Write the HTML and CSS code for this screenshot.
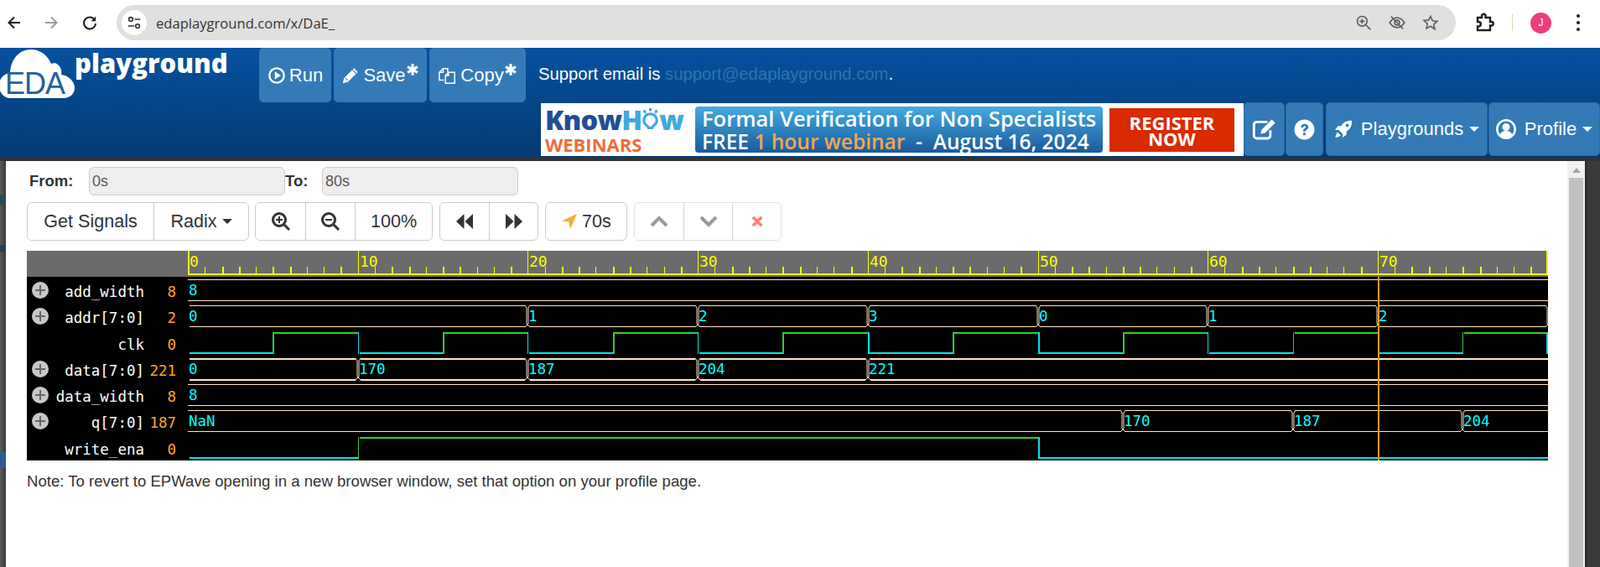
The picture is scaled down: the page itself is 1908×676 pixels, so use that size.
FILE: index.html
```html
<!DOCTYPE html>
<html lang="en">
<head>
  <meta charset="UTF-8" />
  <title>EDA Playground</title>
  <link rel="stylesheet" href="styles.css">
</head>
<body>
  <div class="chrome">
    <svg class="ci ci-back" viewBox="0 0 20 20"><path d="M17 10H4M10 3.5 3.5 10l6.5 6.5"/></svg>
    <svg class="ci ci-fwd" viewBox="0 0 20 20"><path d="M3 10h13M10 3.5l6.5 6.5-6.5 6.500"/></svg>
    <svg class="ci ci-reload" viewBox="0 0 20 20"><path d="M15.800 6.500A7 7 0 1 0 17 11"/><path class="solid" d="M17.200 2.600v5.600h-5.600z"/></svg>
    <div class="omnibox">
      <span class="site-info">
        <svg viewBox="0 0 20 20"><circle cx="5.500" cy="5.500" r="2.600"/><path d="M10.500 5.500H18M2 14.500h8"/><circle cx="14.500" cy="14.500" r="2.600"/></svg>
      </span>
      <span class="url">edaplayground.com/x/DaE_</span>
      <span class="omni-icons">
        <svg class="oi" viewBox="0 0 24 24"><circle cx="10" cy="10" r="7"/><path d="M15 15l7 7M10 6.500v7M6.500 10h7"/></svg>
        <svg class="oi" viewBox="0 0 24 24"><path d="M1.500 12S6 5 12 5s10.500 7 10.500 7-4.500 7-10.500 7S1.500 12 1.500 12z"/><circle cx="12" cy="12" r="3.500"/><path d="M3.500 3l17 18"/></svg>
        <svg class="oi" viewBox="0 0 24 24"><path d="M12 3l2.800 6.300 6.700.7-5 4.600 1.400 6.700L12 17.200l-5.900 3.100 1.400-6.700-5-4.600 6.700-.7z"/></svg>
      </span>
    </div>
    <svg class="ci ci-ext" viewBox="0 0 24 24"><path d="M4 6h5V4a2.200 2.200 0 0 1 4.500 0v2H19v5h1.500a2.200 2.200 0 0 1 0 4.500H19V21H4v-4.500h1.500a2.800 2.800 0 0 0 0-5.500H4z"/></svg>
    <span class="ci-divider"></span>
    <span class="avatar">J</span>
    <span class="dots"><i></i><i></i><i></i></span>
  </div>

  <header class="site-header">
    <div class="head-top">
      <div class="logo">
        <svg class="cloud" viewBox="0 0 92 62">
          <path d="M14 60C5 60 0 53 0 45c0-8 5-14 13-15C14 13 24 2 38 2c11 0 20 7 24 17 3-1 6-1 8 1 4 3 5 8 4 12 9 1 16 8 16 16 0 7-6 12-13 12z"/>
          <text x="7" y="55">EDA</text>
        </svg>
        <span class="logo-word">playground</span>
      </div>
      <a class="btn-head btn-run">
        <svg class="fa" viewBox="0 0 24 24"><circle cx="12" cy="12" r="9.500" class="ring"/><path d="M9.500 6.800v10.400l8-5.200z"/></svg>Run
      </a>
      <a class="btn-head btn-save">
        <svg class="fa" viewBox="0 0 24 24"><path d="M2 22l1.500-6.500L16.500 2.500l5 5L8.500 20.500zM5 16.500l2.500 2.500"/><path class="cut" d="M5.500 15.500l3 3M14.500 4.500l5 5"/></svg>Save<svg class="aster" viewBox="0 0 14 14"><path d="M7 1v12M1.800 4l10.400 6M12.200 4 1.800 10"/></svg>
      </a>
      <a class="btn-head btn-copy">
        <svg class="fa" viewBox="0 0 24 24"><path class="ring" d="M8 18H2V8l5-5h6v5"/><path class="ring" d="M7 3v5H2M10 22V12l4-4h8v14zM14 8v4h-4"/></svg>Copy<svg class="aster" viewBox="0 0 14 14"><path d="M7 1v12M1.800 4l10.400 6M12.200 4 1.800 10"/></svg>
      </a>
      <p class="support">Support email is <a>support@edaplayground.com</a>.</p>
    </div>
    <div class="head-bottom">
      <div class="banner">
        <div class="kh">
          <div class="kh-name">Know<span class="kh-how">H<svg class="bulb" viewBox="0 0 24 32"><path d="M12 9a8.500 8.500 0 0 1 5 15.500c-1.500 1-2 2-2.500 3.500h-5c-.5-1.500-1-2.500-2.500-3.500A8.500 8.500 0 0 1 12 9z"/><path d="M12 1v4M3 4l2.500 3.500M21 4l-2.500 3.500"/></svg>w</span></div>
          <div class="kh-sub">WEBINARS</div>
        </div>
        <div class="bn-blue">
          <div class="bn-line bn-first">Formal Verification for Non Specialists</div>
          <div class="bn-line">FREE <span class="bn-or">1 hour webinar</span>&nbsp; -&nbsp; August 16, 2024</div>
        </div>
        <div class="bn-red">REGISTER<br>NOW</div>
      </div>
      <a class="btn-head btn-edit">
        <svg class="fa" viewBox="0 0 26 24"><path class="ring" d="M19 13v5.500a3 3 0 0 1-3 3H5a3 3 0 0 1-3-3V7.500a3 3 0 0 1 3-3h11"/><path d="M9 17l1-4.500L20.500 2 24 5.500 13.500 16z"/></svg>
      </a>
      <a class="btn-head btn-help">
        <svg class="fa" viewBox="0 0 24 24"><circle cx="12" cy="12" r="11.500"/><path class="hole" d="M8 9.500C8 7 10 5.500 12.300 5.500c2.500 0 4.200 1.600 4.200 3.700 0 3-3.200 3-3.200 5H10.500c0-3.500 3-3.500 3-5 0-.8-.6-1.200-1.300-1.200-.9 0-1.500.6-1.700 1.500zM10.500 15.500h2.800v3h-2.800z"/></svg>
      </a>
      <a class="btn-head btn-play">
        <svg class="fa" viewBox="0 0 24 24"><path d="M23 1c-6-.5-11 2-14 7H5l-4 5h5l5 5v5l5-4v-4c5-3 7.500-8 7-14zM17 5a2 2 0 1 1 0 4 2 2 0 0 1 0-4zM4.500 16c-1.500 1-2.500 4-3 7 3-.5 6-1.500 7-3z"/></svg>Playgrounds<span class="caret"></span>
      </a>
      <a class="btn-head btn-profile">
        <svg class="fa" viewBox="0 0 24 24"><circle cx="12" cy="12" r="10.700" class="ring"/><circle cx="12" cy="9.500" r="4.500"/><path d="M4.500 19c1-3.500 3.500-5 7.500-5s6.500 1.500 7.500 5c-2 2-4.500 3.500-7.500 3.500S6.500 21 4.500 19z"/></svg>Profile<span class="caret"></span>
      </a>
    </div>
  </header>

  <div class="dim-top"></div>
  <div class="page">
    <div class="dim-left"></div>
    <main class="panel">
      <div class="range">
        <label class="lbl-from">From:</label>
        <input class="rng" value="0s" disabled>
        <label class="lbl-to">To:</label>
        <input class="rng" value="80s" disabled>
      </div>
      <div class="toolbar">
        <div class="group g-first">
          <button class="b-signals">Get Signals</button>
          <button class="b-radix">Radix<span class="caret dark"></span></button>
        </div>
        <div class="group">
          <button class="b-zoom"><svg class="tb" viewBox="0 0 24 24"><circle cx="10" cy="10" r="7.500"/><path d="M15.500 15.500 22 22"/><path class="fine" d="M10 6v8M6 10h8"/></svg></button>
          <button class="b-zoom"><svg class="tb" viewBox="0 0 24 24"><circle cx="10" cy="10" r="7.500"/><path d="M15.500 15.500 22 22"/><path class="fine" d="M6 10h8"/></svg></button>
          <button class="b-pct">100%</button>
        </div>
        <div class="group">
          <button class="b-step"><svg class="tb solid" viewBox="0 0 24 24"><path d="M11.500 3v18L2 12zM22 3v18l-9.500-9z"/></svg></button>
          <button class="b-step"><svg class="tb solid" viewBox="0 0 24 24"><path d="M2 3v18l9.500-9zM12.500 3v18L22 12z"/></svg></button>
        </div>
        <div class="group">
          <button class="b-marker"><svg class="tb marker" viewBox="0 0 20 20"><path d="M19 1 11 19l-1.500-8.500L1 9.500z"/></svg>70s</button>
        </div>
        <div class="group off">
          <button class="b-off"><svg class="tb chev" viewBox="0 0 24 24"><path d="M3 17l9-9 9 9"/></svg></button>
          <button class="b-off"><svg class="tb chev" viewBox="0 0 24 24"><path d="M3 7l9 9 9-9"/></svg></button>
          <button class="b-off"><svg class="tb cross" viewBox="0 0 24 24"><path d="M5 5l14 14M19 5 5 19"/></svg></button>
        </div>
      </div>
      <svg id="wave" class="wave" viewBox="32 299 1814 250" width="1814" height="250"></svg>
      <p class="note">Note: To revert to EPWave opening in a new browser window, set that option on your profile page.</p>
    </main>
    <div class="scrollbar">
      <span class="sb-up"></span>
      <span class="sb-thumb"></span>
    </div>
    <div class="dim-right"></div>
  </div>
  <script src="script.js"></script>
</body>
</html>
```
FILE: styles.css
```css
html, body {
  margin: 0;
  padding: 0;
  height: 100%;
  overflow: hidden;
}

body {
  display: flex;
  flex-direction: column;
  font-family: "Liberation Sans", Arial, sans-serif;
  color: #333;
  background: #fff;
}

/* browser bar */
.chrome {
  height: 57px;
  flex: none;
  display: flex;
  align-items: center;
  padding-bottom: 3px;
  box-sizing: border-box;
  background: #fff;
}

.ci {
  width: 20px;
  height: 20px;
  fill: none;
  stroke: #1f1f1f;
  stroke-width: 2;
}

.ci .solid { fill: #1f1f1f; stroke: none; }
.ci-back { margin-left: 7px; }
.ci-fwd { margin-left: 24px; stroke: #9a9a9a; }
.ci-reload { margin-left: 26px; }

.omnibox {
  width: 1597px;
  height: 42px;
  margin-left: 22px;
  border-radius: 21px;
  background: #e0e0e0;
  display: flex;
  align-items: center;
}

.site-info {
  width: 30px;
  height: 30px;
  margin-left: 6px;
  border-radius: 50%;
  background: #fff;
  display: flex;
  align-items: center;
  justify-content: center;
}

.site-info svg {
  width: 18px;
  height: 18px;
  fill: none;
  stroke: #333;
  stroke-width: 1.800;
}

.url {
  margin-left: 11px;
  font-family: "Open Sans", sans-serif;
  font-size: 16.600px;
  color: #333;
  white-space: nowrap;
}

.omni-icons {
  margin-left: auto;
  margin-right: 20px;
  display: flex;
  gap: 20px;
}

.oi {
  width: 20px;
  height: 20px;
  fill: none;
  stroke: #5f5f5f;
  stroke-width: 2;
}

.ci-ext {
  width: 24px;
  height: 24px;
  margin-left: 22px;
  stroke-width: 2.400;
}

.ci-divider {
  width: 1px;
  height: 20px;
  margin-left: 21px;
  background: #c6e0bd;
}

.avatar {
  width: 25px;
  height: 25px;
  margin-left: 21px;
  border-radius: 50%;
  background: #ec3f7d;
  color: #fff;
  font-size: 12px;
  line-height: 25px;
  text-align: center;
}

.dots {
  margin-left: 30px;
  display: flex;
  flex-direction: column;
  gap: 4px;
}

.dots i {
  width: 4px;
  height: 4px;
  border-radius: 50%;
  background: #1f1f1f;
}

/* site header */
.site-header {
  height: 131px;
  flex: none;
  background: linear-gradient(to bottom, #05529f, #033a72);
  color: #fff;
}

.head-top {
  height: 65px;
  display: flex;
  align-items: flex-start;
}

.logo {
  width: 309px;
  display: flex;
  flex: none;
}

.cloud {
  width: 92px;
  height: 62px;
  margin-left: -1px;
  fill: #fff;
}

.cloud text {
  font-size: 36px;
  fill: #26609a;
  stroke: none;
  letter-spacing: -1px;
}

.logo-word {
  margin-left: -2px;
  margin-top: -1px;
  font-family: "Open Sans", sans-serif;
  font-weight: 800;
  font-size: 31px;
  line-height: 38px;
}

.btn-head {
  display: flex;
  align-items: center;
  justify-content: center;
  box-sizing: border-box;
  flex: none;
  background: #337ab7;
  border-radius: 5px;
  font-size: 22px;
  color: #fff;
  border: 1px solid #2e6da4;
  margin-right: 3px;
}

.head-top .btn-head { height: 65px; border-color: #337ab7; }

.btn-run { width: 86px; }
.btn-save { width: 111px; }
.btn-copy { width: 115px; margin-right: 0; }

.fa {
  width: 22px;
  height: 22px;
  margin-right: 4px;
  fill: #fff;
  flex: none;
}

.fa .ring {
  fill: none;
  stroke: #fff;
  stroke-width: 2.500;
}

.btn-copy .fa { margin-right: 5px; }
.btn-copy .fa .ring { stroke-width: 1.600; }
.fa .cut { fill: none; stroke: #337ab7; stroke-width: 1.200; }
.fa .hole { fill: #337ab7; }

.aster {
  width: 16px;
  height: 16px;
  margin: -14px 0 0 0;
  fill: none;
  stroke: #fff;
  stroke-width: 2.800;
}

.support {
  margin: 0 0 0 15px;
  font-size: 20.300px;
  line-height: 62px;
}

.support a { color: #2f72b3; }

.head-bottom {
  height: 65px;
  display: flex;
  justify-content: flex-end;
  align-items: flex-start;
}

.head-bottom .btn-head { height: 64px; }

.banner {
  width: 838px;
  height: 63px;
  margin-top: 1px;
  background: #fff;
  display: flex;
  align-items: stretch;
  flex: none;
  font-family: "Open Sans", sans-serif;
}

.kh {
  width: 184px;
  padding: 2px 0 0 5px;
  flex: none;
  box-sizing: border-box;
}

.kh-name {
  font-weight: 800;
  font-size: 32.500px;
  line-height: 36px;
  letter-spacing: -.8px;
  color: #1f4f94;
  white-space: nowrap;
}

.kh-how { color: #3fa9de; }

.bulb {
  width: 21px;
  height: 30px;
  vertical-align: -2px;
  fill: none;
  stroke: #3fa9de;
  stroke-width: 3.500;
}

.kh-sub {
  margin-top: 1px;
  font-weight: 700;
  font-size: 22px;
  line-height: 20px;
  color: #ef6c3a;
}

.bn-blue {
  width: 486px;
  margin: 4px 0 4px;
  padding-left: 8px;
  box-sizing: border-box;
  flex: none;
  border-radius: 4px;
  background: linear-gradient(to bottom, #43ace0, #1a5a9c);
  color: #fff;
  font-weight: 600;
  font-size: 24.500px;
  line-height: 28px;
  white-space: nowrap;
}

.bn-first { font-size: 25.500px; }
.bn-or { color: #f4a653; }

.bn-red {
  width: 149px;
  margin: 6px 0 5px 8px;
  flex: none;
  background: #d92a00;
  color: #fff;
  font-weight: 700;
  font-size: 22px;
  line-height: 19px;
  text-align: center;
  padding-top: 8px;
  box-sizing: border-box;
}

.btn-edit { width: 49px; margin-left: 0; margin-right: 1px; }
.btn-help { width: 45px; margin-right: 3px; }
.btn-help .fa { width: 25px; height: 25px; margin: 0; }
.btn-edit .fa { width: 30px; height: 28px; margin: 0; }
.btn-play { width: 193px; margin-right: 1px; }
.btn-profile { width: 133px; margin-right: 0; }
.btn-play .fa { width: 22px; height: 22px; margin-right: 10px; }
.btn-profile .fa { width: 24px; height: 24px; margin-right: 10px; }

.caret {
  display: inline-block;
  margin-left: 7px;
  border-top: 6px solid #fff;
  border-left: 6px solid transparent;
  border-right: 6px solid transparent;
}

.caret.dark { border-top-color: #333; margin-left: 6px; }

/* modal with the wave viewer */
.dim-top {
  height: 4px;
  flex: none;
  background: #333;
}

.page {
  flex: 1;
  display: flex;
  min-height: 0;
}

.dim-left {
  width: 7px;
  flex: none;
  background:
    linear-gradient(#2d5c94, #2d5c94) 0 347px / 7px 19px no-repeat,
    linear-gradient(#234d58, #234d58) 0 40px / 7px 12px no-repeat,
    linear-gradient(#2c3f55, #2c3f55) 0 100px / 7px 8px no-repeat,
    linear-gradient(to right, #5a5a5a, #3a3a3a);
}

.dim-right {
  flex: 1;
  background: #3a3a3a;
  border-left: 2px solid #2b2b2b;
}

.panel {
  width: 1862px;
  flex: none;
  box-sizing: border-box;
  padding: 7px 0 0 25px;
  background: #fff;
}

.scrollbar {
  width: 21px;
  flex: none;
  background: #f1f1f1;
  padding-top: 8px;
  display: flex;
  flex-direction: column;
  align-items: center;
}

.sb-up {
  border-bottom: 6px solid #a3a3a3;
  border-left: 5px solid transparent;
  border-right: 5px solid transparent;
}

.sb-thumb {
  width: 17px;
  flex: 1;
  margin-top: 6px;
  background: #c1c1c1;
}

.range {
  height: 34px;
  display: flex;
  align-items: center;
}

.range label {
  font-size: 18.500px;
  font-weight: bold;
}

.lbl-from { width: 74px; padding-left: 3px; box-sizing: border-box; }
.lbl-to { width: 44px; }

.rng {
  width: 234px;
  height: 34px;
  box-sizing: border-box;
  padding: 0 3px;
  border: 1px solid #ccc;
  border-radius: 6px;
  background: #eee;
  font-family: inherit;
  font-size: 18px;
  color: #555;
}

.toolbar {
  margin-top: 8px;
  display: flex;
  gap: 8px;
  height: 46px;
}

.group {
  display: flex;
  box-sizing: border-box;
  border: 1px solid #ccc;
  border-radius: 6px;
  background: #fff;
}

.group.g-first { margin-right: -1px; }
.group.off { border-color: #e3e3e3; }

.group button {
  display: flex;
  align-items: center;
  justify-content: center;
  padding: 0;
  border: 0;
  border-left: 1px solid #ccc;
  background: transparent;
  font-family: inherit;
  font-size: 21.600px;
  color: #333;
  box-sizing: border-box;
}

.group button:first-child { border-left: 0; }
.group.off button { border-left-color: #d5d5d5; }

.b-signals { width: 150px; }
.b-radix { width: 113px; }
.b-zoom { width: 59px; }
.b-pct { width: 92px; }
.b-step { width: 58px; }
.b-marker { width: 96px; }
.b-off { width: 58px; }

.tb {
  width: 24px;
  height: 24px;
  fill: none;
  stroke: #333;
  stroke-width: 3;
}

.tb .fine { stroke-width: 2; }
.tb.solid { fill: #333; stroke: none; }
.tb.marker { width: 20px; height: 20px; margin-right: 5px; fill: #f5ac36; stroke: none; }
.tb.chev { stroke: #999; stroke-width: 4; }
.tb.cross { width: 18px; height: 18px; stroke: #ff8080; stroke-width: 5; }

.wave {
  display: block;
  margin-top: 12px;
}

.wave .ruler-bg { fill: #6b6b6b; }
.wave .black { fill: #000; }
.wave .yl { fill: #ffff00; }
.wave .ln { fill: #ffe4c4; }
.wave .xing { stroke: #ffe4c4; stroke-width: 1; fill: none; }
.wave .hi { fill: #33cc33; }
.wave .lo { fill: #00e5e5; }
.wave .mark { fill: #e09a2b; }
.wave .plus-c { fill: #c8c8c8; }
.wave .plus-p { fill: #666; }

.wave text {
  font-family: "DejaVu Sans Mono", monospace;
  font-size: 17.500px;
}

.wave .t-ruler { fill: #ffff00; font-size: 18px; }
.wave .t-name { fill: #fff; text-anchor: end; }
.wave .t-cur { fill: #ffa726; text-anchor: end; }
.wave .t-val { fill: #00ffff; }

.note {
  margin: 15px 0 0 0;
  font-size: 18.600px;
  line-height: 20px;
  color: #333;
}
```
FILE: script.js
```js
const wave = document.getElementById('wave');
const NS = 'http://www.w3.org/2000/svg';

const X0 = 224;
const PITCH = 20.27;
const END = 1846;
const px = t => Math.round(X0 + t * PITCH);

function add(tag, cls, attrs) {
  const el = document.createElementNS(NS, tag);
  el.setAttribute('class', cls);
  for (const k in attrs) el.setAttribute(k, attrs[k]);
  wave.appendChild(el);
  return el;
}

function rect(cls, x, y, w, h) {
  add('rect', cls, { x: x, y: y, width: w, height: h });
}

function text(cls, x, y, str) {
  add('text', cls, { x: x, y: y }).textContent = str;
}

// signals, as the viewer lists them
const signals = [
  { name: 'add_width', cur: '8', plus: true, bus: [[0, '8']] },
  { name: 'addr[7:0]', cur: '2', plus: true, inset: true, end: true,
    bus: [[0, '0'], [20, '1'], [30, '2'], [40, '3'], [50, '0'], [60, '1'], [70, '2']] },
  { name: 'clk', cur: '0', clock: true },
  { name: 'data[7:0]', cur: '221', plus: true, inset: true, thick: true,
    bus: [[0, '0'], [10, '170'], [20, '187'], [30, '204'], [40, '221']] },
  { name: 'data_width', cur: '8', plus: true, bus: [[0, '8']] },
  { name: 'q[7:0]', cur: '187', plus: true,
    bus: [[0, 'NaN'], [55, '170'], [65, '187'], [75, '204']] },
  { name: 'write_ena', cur: '0', steps: [[0, 10, 0], [10, 50, 1], [50, 80, 0]] }
];

const thinEdges = [10, 20, 30, 60, 65, 70, 75];

function drawRuler() {
  rect('ruler-bg', 32, 299, 1814, 31);
  rect('black', 32, 330, 1814, 219);
  rect('yl', X0, 326, END - X0, 2);
  const pattern = [1, 2, 2, 1, 2, 2, 1, 1, 2];
  for (let t = 0; t < 80; t++) {
    if (t % 10 === 0) {
      rect('yl', px(t), 299, t === 0 ? 2 : 1, 28);
      text('t-ruler', px(t) + 2, 318, String(t));
    } else {
      rect('yl', px(t), 318, pattern[(t % 10) - 1], 9);
    }
  }
  rect('yl', END - 2, 299, 2, 28);
}

function drawBus(s, top) {
  const h = s.thick ? 2 : 1;
  const bottom = top + 25;
  const start = s.inset ? X0 + 2 : X0;
  const times = s.bus.map(b => b[0]).concat(s.end ? [80] : []);
  let from = start;
  times.forEach(t => {
    if (t === 0) return;
    const x = px(t);
    rect('ln', from, top, x - 3 - from, h);
    rect('ln', from, bottom, x - 3 - from, h);
    add('path', 'xing', { d: `M${x - 3} ${top}L${x - 1} ${top + 3}V${bottom - 3}L${x + 3} ${bottom + 1}M${x + 3} ${top}L${x + 1} ${top + 3}V${bottom - 3}L${x - 3} ${bottom + 1}` });
    from = x + 3;
  });
  if (from < END) {
    rect('ln', from, top, END - from, h);
    rect('ln', from, bottom, END - from, h);
  }
  s.bus.forEach(b => {
    const x = b[0] === 0 ? X0 + 1 : px(b[0]) + 1;
    text('t-val', x, top + 19, b[1]);
  });
}

function drawSteps(steps, top) {
  steps.forEach((st, i) => {
    const a = px(st[0]);
    const b = px(st[1]);
    const y = st[2] ? top : top + 24;
    rect(st[2] ? 'hi' : 'lo', a + 2, y, b - a - 1, 2);
    if (i > 0) {
      const w = thinEdges.includes(st[0]) ? 1 : 2;
      rect(st[2] ? 'hi' : 'lo', a, top, w, 26);
    }
  });
}

function drawSignals() {
  signals.forEach((s, i) => {
    const top = Math.round(333 + i * 31.25);
    if (s.plus) {
      add('circle', 'plus-c', { cx: 48, cy: top + 13, r: 10 });
      rect('plus-p', 42, top + 12, 12, 2);
      rect('plus-p', 47, top + 7, 2, 12);
    }
    text('t-name', 172, top + 21, s.name);
    text('t-cur', 210, top + 21, s.cur);

    if (s.bus) drawBus(s, top);
    if (s.steps) drawSteps(s.steps, top);
    if (s.clock) {
      const steps = [];
      for (let t = 0; t < 80; t += 5) steps.push([t, t + 5, (t / 5) % 2]);
      drawSteps(steps, top);
      rect('lo', END - 2, top, 2, 26);
    }
  });
  // marker at 70
  rect('mark', px(70), 330, 2, 219);
}

drawRuler();
drawSignals();
```
